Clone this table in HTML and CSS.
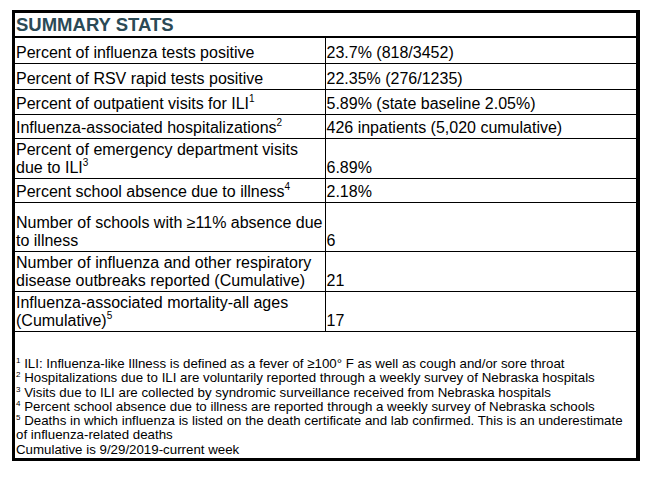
FILE: index.html
```html
<!DOCTYPE html>
<html lang="en">
    <head>
        <meta charset="utf-8">
        <title>Summary Stats</title>
        <meta name="viewport" content="width=device-width, initial-scale=1">
        <link rel="stylesheet" href="styles.css">
    </head>
    <body>

        <div class="stats">
            <table class="stats__table">
                <tr class="stats__title">
                    <th colspan="2">SUMMARY STATS</th>
                </tr>
                <tr class="row--26">
                    <td class="stats__label">Percent of influenza tests positive</td>
                    <td>23.7% (818/3452)</td>
                </tr>
                <tr class="row--26">
                    <td class="stats__label">Percent of RSV rapid tests positive</td>
                    <td>22.35% (276/1235)</td>
                </tr>
                <tr class="row--25">
                    <td class="stats__label">Percent of outpatient visits for ILI<sup>1</sup></td>
                    <td>5.89% (state baseline 2.05%)</td>
                </tr>
                <tr class="row--24">
                    <td class="stats__label">Influenza-associated hospitalizations<sup>2</sup></td>
                    <td>426 inpatients (5,020 cumulative)</td>
                </tr>
                <tr class="row--40">
                    <td class="stats__label">Percent of emergency department visits due to ILI<sup>3</sup></td>
                    <td>6.89%</td>
                </tr>
                <tr class="row--24">
                    <td class="stats__label">Percent school absence due to illness<sup>4</sup></td>
                    <td>2.18%</td>
                </tr>
                <tr class="row--49">
                    <td class="stats__label">Number of schools with &ge;11% absence due to illness</td>
                    <td>6</td>
                </tr>
                <tr class="row--40">
                    <td class="stats__label">Number of influenza and other respiratory disease outbreaks reported (Cumulative)</td>
                    <td>21</td>
                </tr>
                <tr class="row--40">
                    <td class="stats__label">Influenza-associated mortality-all ages (Cumulative)<sup>5</sup></td>
                    <td>17</td>
                </tr>
            </table>

            <div class="stats__notes">
                <p><sup>1</sup> ILI: Influenza-like Illness is defined as a fever of &ge;100&deg; F as well as cough and/or sore throat</p>
                <p><sup>2</sup> Hospitalizations due to ILI are voluntarily reported through a weekly survey of Nebraska hospitals</p>
                <p><sup>3</sup> Visits due to ILI are collected by syndromic surveillance received from Nebraska hospitals</p>
                <p><sup>4</sup> Percent school absence due to illness are reported through a weekly survey of Nebraska schools</p>
                <p><sup>5</sup> Deaths in which influenza is listed on the death certificate and lab confirmed. This is an underestimate of influenza-related deaths</p>
                <p>Cumulative is 9/29/2019-current week</p>
            </div>
        </div>

    </body>
</html>
```

FILE: styles.css
```css
* {
    box-sizing: border-box;
}

body {
    margin: 0;
    padding: 10px 0 0 12px;
    font-family: "Liberation Sans", Arial, sans-serif;
    color: #000;
    background: #fff;
}

.stats {
    width: 628px;
    height: 451px;
    border: 3px solid #000;
    border-right-width: 4px;
    display: flex;
    flex-direction: column;
}

.stats__table {
    width: 100%;
    border-collapse: collapse;
    font-size: 16px;
    line-height: 18px;
}

.stats__title th {
    height: 24px;
    padding: 0 0 0 1px;
    text-align: left;
    vertical-align: middle;
    font-size: 18.5px;
    line-height: 20px;
    font-weight: bold;
    color: #2b4a56;
    border-bottom: 2px solid #000;
}

.stats__table td {
    padding: 0 1px 1px 1px;
    vertical-align: bottom;
    border-bottom: 1px solid #000;
}

.stats__table td.stats__label {
    width: 310px;
    padding-right: 0;
    border-right: 1px solid #000;
}

.stats__table sup {
    font-size: 10px;
    line-height: 0;
    vertical-align: 7px;
}

.row--24 { height: 24px; }
.row--25 { height: 25px; }
.row--26 { height: 26px; }
.row--40 { height: 40px; }
.row--49 { height: 49px; }

.stats__notes {
    margin-top: auto;
    padding: 0 0 1px 1px;
    font-size: 13.3px;
    line-height: 14.3px;
}

.stats__notes p {
    margin: 0;
}

.stats__notes sup {
    font-size: 8px;
    line-height: 0;
    vertical-align: 5px;
}
```
